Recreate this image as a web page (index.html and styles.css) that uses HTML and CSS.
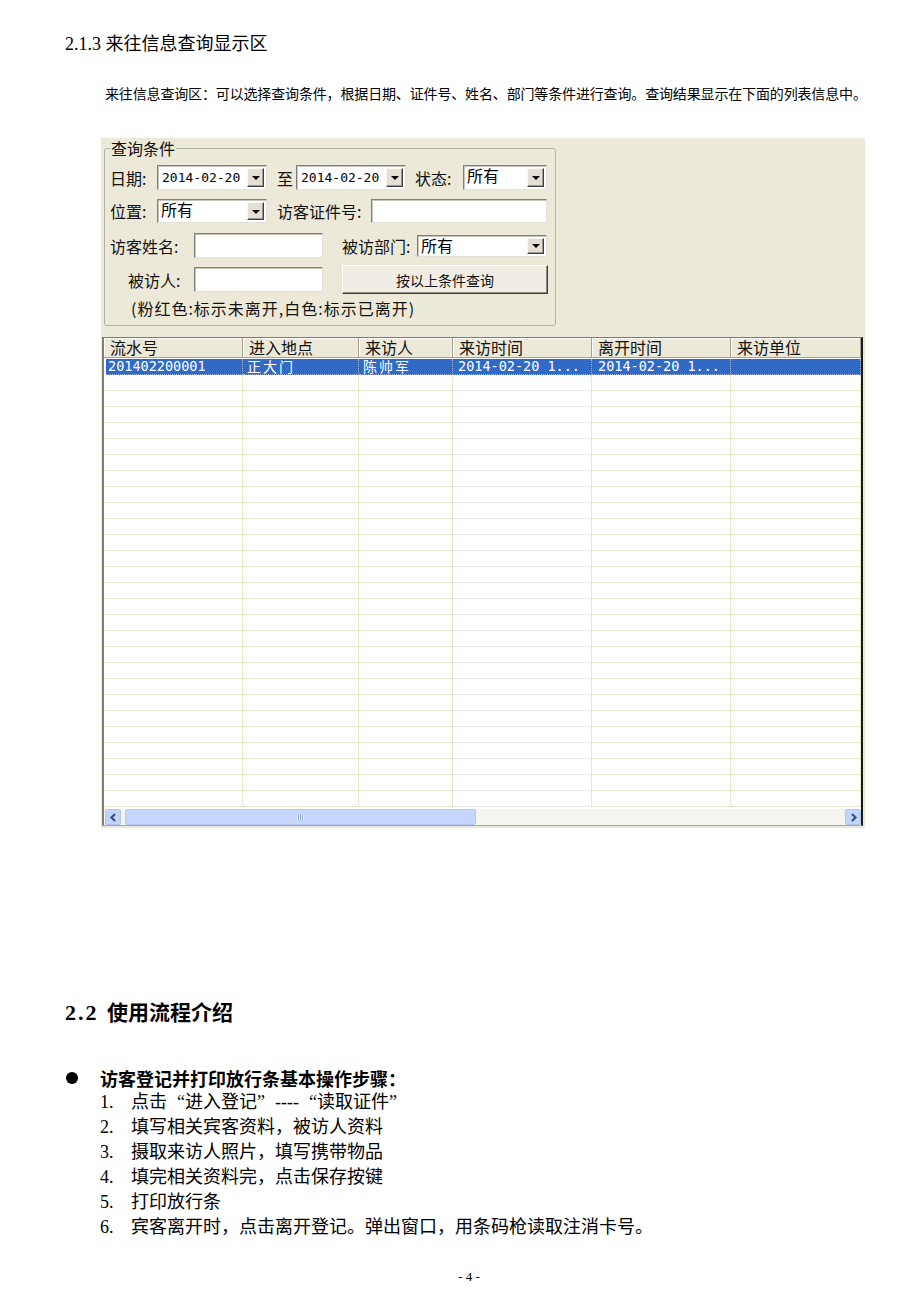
FILE: index.html
```html
<!DOCTYPE html>
<html lang="zh-CN">
<head>
<meta charset="utf-8">
<title>来往信息查询显示区</title>
<link rel="stylesheet" href="styles.css">
</head>
<body>
<div class="page">
  <h2 class="h213">2.1.3 来往信息查询显示区</h2>
  <p class="intro">来往信息查询区：可以选择查询条件，根据日期、证件号、姓名、部门等条件进行查询。查询结果显示在下面的列表信息中。</p>

  <div class="shot">
    <fieldset class="group">
      <legend>查询条件</legend>
      <div class="frow r1">
        <span class="lbl l-date">日期:</span>
        <div class="box w110"><span class="val mono">2014-02-20</span><span class="drop"></span></div>
        <span class="lbl l-to">至</span>
        <div class="box w110"><span class="val mono">2014-02-20</span><span class="drop"></span></div>
        <span class="lbl l-state">状态:</span>
        <div class="box w84"><span class="val top">所有</span><span class="drop"></span></div>
      </div>
      <div class="frow r2">
        <span class="lbl l-date">位置:</span>
        <div class="box w110"><span class="val top">所有</span><span class="drop"></span></div>
        <span class="lbl l-id">访客证件号:</span>
        <div class="box w176"></div>
      </div>
      <div class="frow r3">
        <span class="lbl l-name">访客姓名:</span>
        <div class="box w129"></div>
        <span class="lbl l-dept">被访部门:</span>
        <div class="box w130 bh22"><span class="val top">所有</span><span class="drop"></span></div>
      </div>
      <div class="frow r4">
        <span class="lbl l-host">被访人:</span>
        <div class="box w129 bh25"></div>
        <button class="qbtn" type="button">按以上条件查询</button>
      </div>
      <p class="note">(粉红色:标示未离开,白色:标示已离开)</p>
    </fieldset>

    <div class="grid">
      <div class="ghead">
        <div class="c1">流水号</div>
        <div class="c2">进入地点</div>
        <div class="c3">来访人</div>
        <div class="c4">来访时间</div>
        <div class="c5">离开时间</div>
        <div class="c6">来访单位</div>
      </div>
      <div class="gbody">
        <div class="tr sel">
          <i class="c1 mono">201402200001</i><i class="c2">正大门</i><i class="c3">陈帅军</i><i class="c4 mono">2014-02-20 1...</i><i class="c5 mono">2014-02-20 1...</i><i class="c6"></i>
        </div>
        <div class="tr"><i class="c1"></i><i class="c2"></i><i class="c3"></i><i class="c4"></i><i class="c5"></i><i class="c6"></i></div>
        <div class="tr"><i class="c1"></i><i class="c2"></i><i class="c3"></i><i class="c4"></i><i class="c5"></i><i class="c6"></i></div>
        <div class="tr"><i class="c1"></i><i class="c2"></i><i class="c3"></i><i class="c4"></i><i class="c5"></i><i class="c6"></i></div>
        <div class="tr"><i class="c1"></i><i class="c2"></i><i class="c3"></i><i class="c4"></i><i class="c5"></i><i class="c6"></i></div>
        <div class="tr"><i class="c1"></i><i class="c2"></i><i class="c3"></i><i class="c4"></i><i class="c5"></i><i class="c6"></i></div>
        <div class="tr"><i class="c1"></i><i class="c2"></i><i class="c3"></i><i class="c4"></i><i class="c5"></i><i class="c6"></i></div>
        <div class="tr"><i class="c1"></i><i class="c2"></i><i class="c3"></i><i class="c4"></i><i class="c5"></i><i class="c6"></i></div>
        <div class="tr"><i class="c1"></i><i class="c2"></i><i class="c3"></i><i class="c4"></i><i class="c5"></i><i class="c6"></i></div>
        <div class="tr"><i class="c1"></i><i class="c2"></i><i class="c3"></i><i class="c4"></i><i class="c5"></i><i class="c6"></i></div>
        <div class="tr"><i class="c1"></i><i class="c2"></i><i class="c3"></i><i class="c4"></i><i class="c5"></i><i class="c6"></i></div>
        <div class="tr"><i class="c1"></i><i class="c2"></i><i class="c3"></i><i class="c4"></i><i class="c5"></i><i class="c6"></i></div>
        <div class="tr"><i class="c1"></i><i class="c2"></i><i class="c3"></i><i class="c4"></i><i class="c5"></i><i class="c6"></i></div>
        <div class="tr"><i class="c1"></i><i class="c2"></i><i class="c3"></i><i class="c4"></i><i class="c5"></i><i class="c6"></i></div>
        <div class="tr"><i class="c1"></i><i class="c2"></i><i class="c3"></i><i class="c4"></i><i class="c5"></i><i class="c6"></i></div>
        <div class="tr"><i class="c1"></i><i class="c2"></i><i class="c3"></i><i class="c4"></i><i class="c5"></i><i class="c6"></i></div>
        <div class="tr"><i class="c1"></i><i class="c2"></i><i class="c3"></i><i class="c4"></i><i class="c5"></i><i class="c6"></i></div>
        <div class="tr"><i class="c1"></i><i class="c2"></i><i class="c3"></i><i class="c4"></i><i class="c5"></i><i class="c6"></i></div>
        <div class="tr"><i class="c1"></i><i class="c2"></i><i class="c3"></i><i class="c4"></i><i class="c5"></i><i class="c6"></i></div>
        <div class="tr"><i class="c1"></i><i class="c2"></i><i class="c3"></i><i class="c4"></i><i class="c5"></i><i class="c6"></i></div>
        <div class="tr"><i class="c1"></i><i class="c2"></i><i class="c3"></i><i class="c4"></i><i class="c5"></i><i class="c6"></i></div>
        <div class="tr"><i class="c1"></i><i class="c2"></i><i class="c3"></i><i class="c4"></i><i class="c5"></i><i class="c6"></i></div>
        <div class="tr"><i class="c1"></i><i class="c2"></i><i class="c3"></i><i class="c4"></i><i class="c5"></i><i class="c6"></i></div>
        <div class="tr"><i class="c1"></i><i class="c2"></i><i class="c3"></i><i class="c4"></i><i class="c5"></i><i class="c6"></i></div>
        <div class="tr"><i class="c1"></i><i class="c2"></i><i class="c3"></i><i class="c4"></i><i class="c5"></i><i class="c6"></i></div>
        <div class="tr"><i class="c1"></i><i class="c2"></i><i class="c3"></i><i class="c4"></i><i class="c5"></i><i class="c6"></i></div>
        <div class="tr"><i class="c1"></i><i class="c2"></i><i class="c3"></i><i class="c4"></i><i class="c5"></i><i class="c6"></i></div>
        <div class="tr"><i class="c1"></i><i class="c2"></i><i class="c3"></i><i class="c4"></i><i class="c5"></i><i class="c6"></i></div>
      </div>
      <div class="hscroll">
        <span class="sbtn"><svg width="11" height="11" viewBox="0 0 11 11"><path d="M7 2 L3.5 5.5 L7 9" fill="none" stroke="#3d4f78" stroke-width="2.2"/></svg></span>
        <span class="track"><span class="thumb"><span class="grip"></span></span></span>
        <span class="sbtn"><svg width="11" height="11" viewBox="0 0 11 11"><path d="M4 2 L7.5 5.5 L4 9" fill="none" stroke="#3d4f78" stroke-width="2.2"/></svg></span>
      </div>
    </div>
  </div>

  <h2 class="sec22"><span class="num">2.2</span>使用流程介绍</h2>

  <div class="steps">
    <div class="bullet"><span class="dot"></span>访客登记并打印放行条基本操作步骤：</div>
    <ol class="items">
      <li><span class="n">1.</span>点击<span class="q qo">“</span>进入登记<span class="q qc">”</span>----<span class="q qo">“</span>读取证件<span class="q qc">”</span></li>
      <li><span class="n">2.</span>填写相关宾客资料，被访人资料</li>
      <li><span class="n">3.</span>摄取来访人照片，填写携带物品</li>
      <li><span class="n">4.</span>填完相关资料完，点击保存按键</li>
      <li><span class="n">5.</span>打印放行条</li>
      <li><span class="n">6.</span>宾客离开时，点击离开登记。弹出窗口，用条码枪读取注消卡号。</li>
    </ol>
  </div>

  <div class="pageno">- 4 -</div>
</div>
</body>
</html>
```

FILE: styles.css
```css
* { box-sizing: border-box; }

body {
  margin: 0;
  background: #fff;
  color: #000;
  font-family: "Liberation Serif", "Noto Sans CJK SC", serif;
}

.page {
  width: 920px;
  height: 1302px;
  overflow: hidden;
}

.h213 {
  margin: 34px 0 0 65px;
  font-size: 18px;
  line-height: 20px;
  font-weight: normal;
}

.intro {
  margin: 31px 0 0 105px;
  font-size: 14px;
  line-height: 20px;
  letter-spacing: -0.15px;
  white-space: nowrap;
}

/* ---------- screenshot panel ---------- */
.shot {
  margin: 33px 0 0 101px;
  width: 764px;
  height: 690px;
  background: #ECE9D8;
  font-family: "Noto Sans CJK SC", "Liberation Sans", sans-serif;
  overflow: hidden;
}

.mono {
  font-family: "DejaVu Sans Mono", "Liberation Mono", monospace;
}

.group {
  margin: 0 0 0 3px;
  width: 452px;
  min-width: 0;
  border: 1px solid #B4B2A4;
  border-radius: 3px;
  padding: 0 0 7px 5px;
}

.group legend {
  padding: 0 1px;
  font-size: 16px;
  line-height: 20px;
  color: #111;
}

.frow {
  display: flex;
  align-items: center;
  font-size: 16px;
  line-height: 20px;
}

.r1 { margin-top: 7px; height: 25px; }
.r2 { margin-top: 9px; height: 24px; }
.r3 { margin-top: 10px; height: 25px; }
.r4 { margin-top: 7px; height: 29px; }

.lbl {
  flex: none;
  white-space: nowrap;
  color: #111;
}
.l-date { width: 47px; }
.l-to { width: 19px; margin-left: 10px; }
.l-state { width: 48px; margin-left: 9px; }
.l-id { width: 94px; margin-left: 10px; }
.l-name { width: 84px; }
.l-dept { width: 75px; margin-left: 19px; }
.l-host { width: 84px; padding-left: 18px; }

.box {
  flex: none;
  display: flex;
  height: 100%;
  background: #fff;
  border: 1px solid;
  border-color: #7f7f7f #e4e2d8 #e4e2d8 #7f7f7f;
  box-shadow: inset 1px 1px 0 #c8c6bc;
}
.w84 { width: 84px; }
.w110 { width: 110px; }
.w129 { width: 129px; }
.w130 { width: 130px; }
.w176 { width: 176px; }
.bh22 { height: 22px; }
.bh25 { height: 25px; }

.val {
  flex: 1;
  padding-left: 4px;
  align-self: center;
  font-size: 13px;
  line-height: 18px;
  white-space: nowrap;
}
.val.top {
  align-self: flex-start;
  padding-left: 3px;
  font-size: 16px;
  line-height: 18px;
}

.drop {
  flex: none;
  width: 17px;
  margin: 2px 2px 2px 0;
  background: #E4E1D4;
  border: 1px solid;
  border-color: #f8f8f4 #404040 #404040 #f8f8f4;
  box-shadow: inset -1px -1px 0 #9a9890;
  display: flex;
  align-items: center;
  justify-content: center;
}
.drop::after {
  content: "";
  border-left: 4px solid transparent;
  border-right: 4px solid transparent;
  border-top: 4px solid #000;
  margin-top: 1px;
}

.qbtn {
  flex: none;
  width: 206px;
  height: 29px;
  margin-left: 19px;
  padding: 0;
  background: #EFEDE4;
  border: 1px solid;
  border-color: #fff #404040 #404040 #fff;
  box-shadow: inset -1px -1px 0 #8c8a80;
  font-family: "Noto Sans CJK SC", "Liberation Sans", sans-serif;
  font-size: 14px;
  line-height: 18px;
  color: #111;
}

.note {
  margin: 4px 0 0 21px;
  font-size: 16px;
  line-height: 20px;
  letter-spacing: 1px;
  color: #111;
}

/* ---------- grid ---------- */
.grid {
  margin: 11px 0 0 1px;
  width: 761px;
  height: 489px;
  background: #fff;
  border-top: 1px solid #7a7a7a;
  border-left: 2px solid #857f70;
  border-right: 2px solid #1a1a1a;
  border-bottom: 1px solid #a8a8a0;
  display: flex;
  flex-direction: column;
  overflow: hidden;
}

.ghead {
  flex: none;
  display: flex;
  height: 20px;
  background: #ECE9D8;
  border-bottom: 1px solid #a6a396;
}
.ghead > div {
  flex-shrink: 0;
  height: 19px;
  padding-left: 6px;
  font-size: 16px;
  line-height: 19px;
  color: #111;
  border-right: 1px solid #a6a396;
  box-shadow: inset 1px 1px 0 #fff;
  white-space: nowrap;
}

.c1 { width: 139px; }
.c2 { width: 116px; }
.c3 { width: 94px; }
.c4 { width: 139px; }
.c5 { width: 139px; }
.c6 { flex: 1; }

.gbody {
  flex: 1;
  overflow: hidden;
  padding-top: 1px;
}

.tr {
  display: flex;
  height: 16px;
}
.tr i {
  flex-shrink: 0;
  font-style: normal;
  height: 16px;
  border-right: 1px dotted #d8d3bd;
  border-bottom: 1px dotted #d8d3bd;
  white-space: nowrap;
  overflow: hidden;
}
.tr i.c6 { flex: 1; }

.tr.sel {
  background: #316AC5;
  margin-left: 2px;
}
.tr.sel i {
  color: #fff;
  padding-left: 2px;
  font-size: 14px;
  line-height: 15px;
  letter-spacing: 2px;
  border-right: 1px dotted #9db4de;
  border-bottom: 1px dotted #9db4de;
}
.tr.sel i.mono { font-size: 13.5px; letter-spacing: 0; padding-left: 2px; }
.tr.sel i.c1 { width: 137px; }
.tr.sel i.c2, .tr.sel i.c3 { padding-left: 4px; }
.tr.sel i.c4 { padding-left: 5px; }
.tr.sel i.c5 { padding-left: 6px; }

.hscroll {
  flex: none;
  display: flex;
  height: 16px;
  background: #F5F4EE;
}
.sbtn {
  flex: none;
  width: 16px;
  height: 16px;
  margin-left: 1px;
  background: #C3D4FB;
  border: 1px solid #b0c4f0;
  border-radius: 2px;
  display: flex;
  align-items: center;
  justify-content: center;
}
.track {
  flex: 1;
  display: flex;
  padding-left: 4px;
}
.thumb {
  width: 351px;
  height: 16px;
  background: #C6D6FC;
  border: 1px solid #b4c8f4;
  border-radius: 2px;
  display: flex;
  align-items: center;
  justify-content: center;
}
.grip {
  width: 7px;
  height: 6px;
  background: repeating-linear-gradient(90deg, #eef3ff 0 1px, #8fa8de 1px 2px);
}

/* ---------- lower text ---------- */
.sec22 {
  margin: 173px 0 0 65px;
  font-size: 21px;
  line-height: 24px;
  font-weight: bold;
}
.sec22 .num {
  display: inline-block;
  width: 42px;
  font-family: "Liberation Serif", serif;
  font-size: 22px;
  font-weight: bold;
  letter-spacing: 2px;
}

.steps {
  margin-top: 40px;
}

.bullet {
  display: flex;
  align-items: center;
  height: 25px;
  font-size: 18px;
  font-weight: bold;
}
.bullet .dot {
  flex: none;
  width: 12px;
  height: 12px;
  border-radius: 50%;
  background: #000;
  margin: 0 22px 0 66px;
}

.items {
  list-style: none;
  margin: 0;
  padding: 0 0 0 100px;
}
.items li {
  height: 25px;
  font-size: 18px;
  line-height: 25px;
  white-space: nowrap;
}
.items .n {
  display: inline-block;
  width: 31px;
}
.items .q {
  display: inline-block;
  width: 18px;
}
.items .qo { text-align: right; }
.items .qc { text-align: left; }

.pageno {
  margin-top: 27px;
  padding-left: 18px;
  text-align: center;
  font-size: 13px;
  line-height: 20px;
}
```
